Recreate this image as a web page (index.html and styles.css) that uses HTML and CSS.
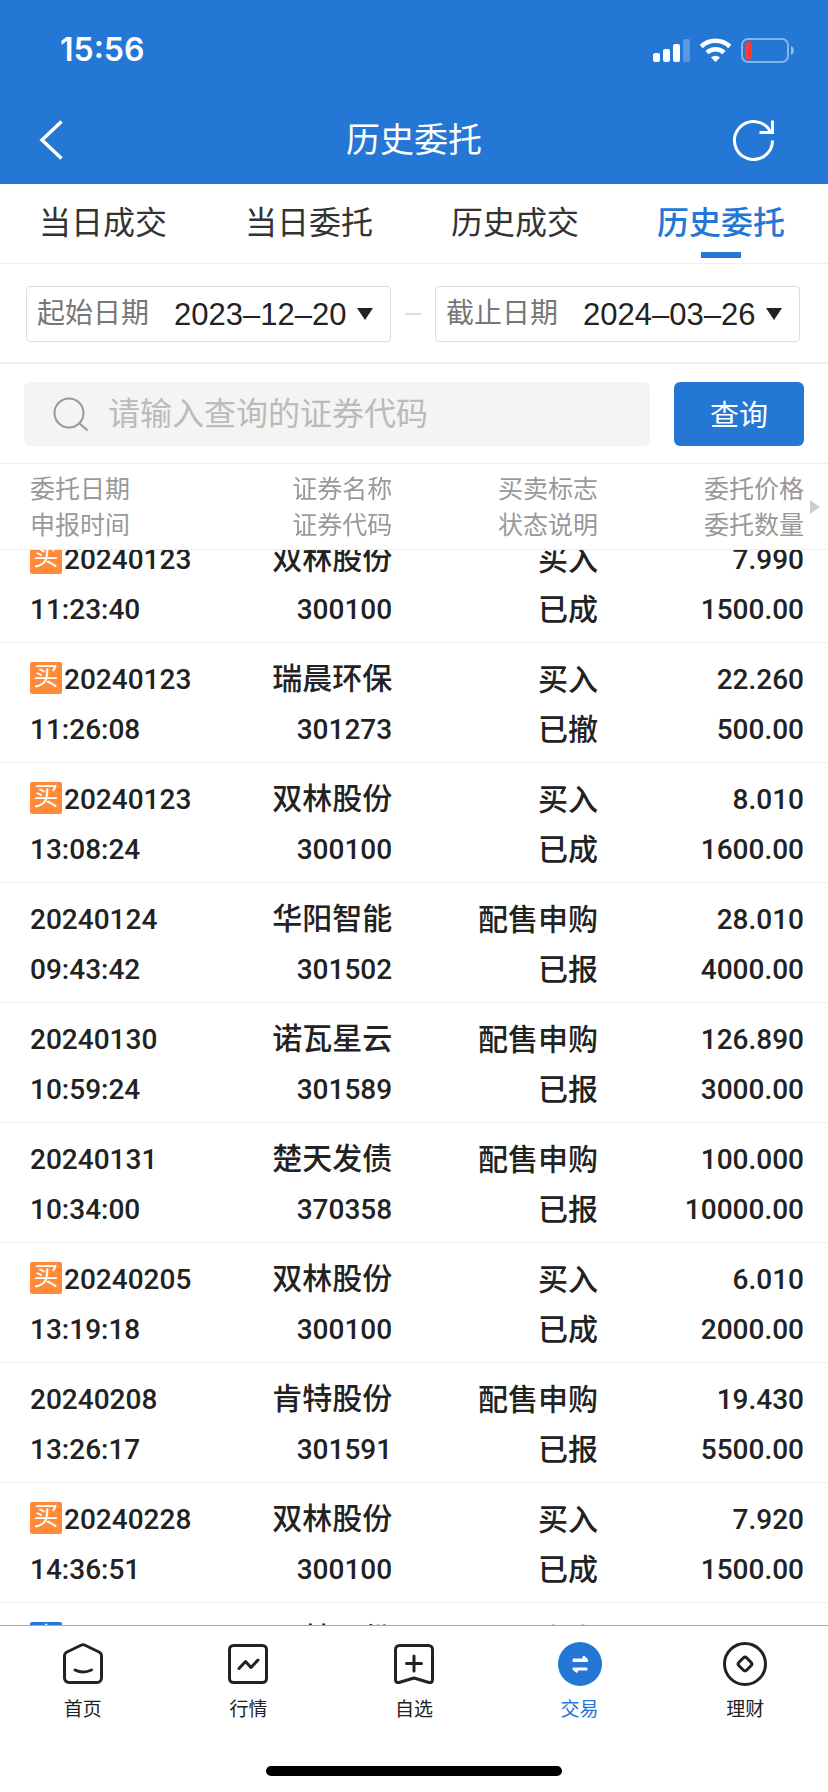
FILE: index.html
```
<!DOCTYPE html>
<html lang="zh-CN">
<head>
    <meta charset="UTF-8">
    <meta name="viewport" content="width=device-width, initial-scale=1.0">
    <title>历史委托</title>
    <link rel="stylesheet" href="styles.css">
</head>
<body>
    <header class="header">
        <div class="status-bar">
            <span class="time">15:56</span>
            <svg class="status-icons" width="144" height="28" viewBox="0 0 144 28">
                <g fill="#fff">
                    <rect x="3" y="17" width="7" height="9" rx="2"/>
                    <rect x="13" y="13" width="7" height="13" rx="2"/>
                    <rect x="23" y="8" width="7" height="18" rx="2"/>
                    <rect x="33" y="3" width="7" height="23" rx="2" opacity=".25"/>
                    <path d="M65.500 26l-4.500-4.500a6.400 6.400 0 0 1 9 0z"/>
                </g>
                <path d="M57 16.700a12.300 12.300 0 0 1 17 0M51.200 10.500a20.800 20.800 0 0 1 28.600 0" fill="none" stroke="#fff" stroke-width="4.500"/>
                <rect x="92" y="3" width="46" height="23" rx="6" fill="none" stroke="#fff" stroke-opacity=".45" stroke-width="2"/>
                <rect x="95" y="6" width="7" height="17" rx="2.500" fill="#ff3b30"/>
                <path d="M141 10v9c4-1.500 4-7.500 0-9z" fill="#fff" opacity=".5"/>
            </svg>
        </div>
        <div class="title-bar">
            <button class="icon-btn" type="button" aria-label="返回">
                <svg width="24" height="42" viewBox="0 0 24 42" fill="none" stroke="#fff" stroke-width="3.500"><path d="M22.500 2.500L3 21l19.500 18.500"/></svg>
            </button>
            <h1>历史委托</h1>
            <button class="icon-btn refresh" type="button" aria-label="刷新">
                <svg width="42" height="42" viewBox="0 0 42 42" fill="none" stroke="#fff" stroke-width="3">
                    <path d="M39.500 21.500A19 19 0 1 1 37.500 13"/>
                    <path d="M39.500 1.500V13.500H26.500"/>
                </svg>
            </button>
        </div>
    </header>

    <nav class="tabs">
        <a href="#">当日成交</a>
        <a href="#">当日委托</a>
        <a href="#">历史成交</a>
        <a href="#" class="active">历史委托</a>
    </nav>

    <form class="query">
        <div class="dates">
            <div class="date-field">
                <label for="startDate">起始日期</label>
                <select id="startDate"><option>2023–12–20</option></select>
                <svg class="arrow" width="16" height="12" viewBox="0 0 16 12"><path d="M0 0h16L8 12z" fill="#222"/></svg>
            </div>
            <span class="dash"></span>
            <div class="date-field">
                <label for="endDate">截止日期</label>
                <select id="endDate"><option>2024–03–26</option></select>
                <svg class="arrow" width="16" height="12" viewBox="0 0 16 12"><path d="M0 0h16L8 12z" fill="#222"/></svg>
            </div>
        </div>
        <div class="search">
            <label class="search-box" for="code">
                <svg width="36" height="36" viewBox="0 0 36 36" fill="none" stroke="#999" stroke-width="2"><circle cx="17" cy="17" r="14.500"/><path d="M27.500 27.500l8 7"/></svg>
                <input id="code" type="text" placeholder="请输入查询的证券代码" aria-label="证券代码">
            </label>
            <button class="search-btn" type="button">查询</button>
        </div>
    </form>

    <main class="orders" id="orders">
        <table>
            <thead>
                <tr>
                    <th>委托日期<br>申报时间</th>
                    <th>证券名称<br>证券代码</th>
                    <th>买卖标志<br>状态说明</th>
                    <th>委托价格<br>委托数量
                        <svg class="more" width="10" height="14" viewBox="0 0 10 14"><path d="M0 0l10 7-10 7z" fill="#ccc"/></svg>
                    </th>
                </tr>
            </thead>
            <tbody>
                <tr><td><span class="tag buy">买</span>20240123<br>11:23:40</td><td><span class="cn">双林股份</span><br>300100</td><td class="cn">买入<br>已成</td><td>7.990<br>1500.00</td></tr>
                <tr><td><span class="tag buy">买</span>20240123<br>11:26:08</td><td><span class="cn">瑞晨环保</span><br>301273</td><td class="cn">买入<br>已撤</td><td>22.260<br>500.00</td></tr>
                <tr><td><span class="tag buy">买</span>20240123<br>13:08:24</td><td><span class="cn">双林股份</span><br>300100</td><td class="cn">买入<br>已成</td><td>8.010<br>1600.00</td></tr>
                <tr><td>20240124<br>09:43:42</td><td><span class="cn">华阳智能</span><br>301502</td><td class="cn">配售申购<br>已报</td><td>28.010<br>4000.00</td></tr>
                <tr><td>20240130<br>10:59:24</td><td><span class="cn">诺瓦星云</span><br>301589</td><td class="cn">配售申购<br>已报</td><td>126.890<br>3000.00</td></tr>
                <tr><td>20240131<br>10:34:00</td><td><span class="cn">楚天发债</span><br>370358</td><td class="cn">配售申购<br>已报</td><td>100.000<br>10000.00</td></tr>
                <tr><td><span class="tag buy">买</span>20240205<br>13:19:18</td><td><span class="cn">双林股份</span><br>300100</td><td class="cn">买入<br>已成</td><td>6.010<br>2000.00</td></tr>
                <tr><td>20240208<br>13:26:17</td><td><span class="cn">肯特股份</span><br>301591</td><td class="cn">配售申购<br>已报</td><td>19.430<br>5500.00</td></tr>
                <tr><td><span class="tag buy">买</span>20240228<br>14:36:51</td><td><span class="cn">双林股份</span><br>300100</td><td class="cn">买入<br>已成</td><td>7.920<br>1500.00</td></tr>
                <tr><td><span class="tag sell">卖</span></td><td><span class="cn">双林股份</span></td><td class="cn">卖出</td><td></td></tr>
            </tbody>
        </table>
    </main>

    <footer class="footer">
        <nav class="bottom-nav">
            <a href="#">
                <svg width="44" height="44" viewBox="0 0 44 44" fill="none" stroke="#222" stroke-width="3" stroke-linecap="round" stroke-linejoin="round">
                    <path d="M20.500 3a3.500 3.500 0 0 1 3 0L38 10q2.500 1.300 2.500 4v22a4.500 4.500 0 0 1-4.500 4.500H8A4.500 4.500 0 0 1 3.500 36V14q0-2.700 2.500-4z"/>
                    <path d="M14 28q8 4 16.500 0"/>
                </svg>
                <span>首页</span>
            </a>
            <a href="#">
                <svg width="44" height="44" viewBox="0 0 44 44" fill="none" stroke="#222" stroke-width="3" stroke-linecap="round" stroke-linejoin="round">
                    <rect x="3.500" y="3.500" width="37" height="37" rx="4"/>
                    <path d="M13 26.500l6.500-7 5.500 6 7-7.500"/>
                </svg>
                <span>行情</span>
            </a>
            <a href="#">
                <svg width="44" height="44" viewBox="0 0 44 44" fill="none" stroke="#222" stroke-width="3" stroke-linecap="round" stroke-linejoin="round">
                    <path d="M7.500 3.500h29a4 4 0 0 1 4 4V37.500q0 3.500-3.500 3L22 36 7 40.500q-3.500.5-3.500-3V7.500a4 4 0 0 1 4-4z"/>
                    <path d="M22 14v15M14.500 21.500h15"/>
                </svg>
                <span>自选</span>
            </a>
            <a href="#" class="active">
                <svg width="44" height="44" viewBox="0 0 44 44">
                    <circle cx="22" cy="22" r="22" fill="#2577d5"/>
                    <path d="M15 16.500h9.500v-1.500q.5-2 2-1l3 3q1.500 1.500 0 3H15q-1-1.700 0-3.500zM29 25.500H15q-1.500 1.500 0 2.500l3 2.500q1.500 1 2-1v-1H29q1.500-1.500 0-3z" fill="#fff"/>
                </svg>
                <span>交易</span>
            </a>
            <a href="#">
                <svg width="44" height="44" viewBox="0 0 44 44" fill="none" stroke="#222" stroke-width="3">
                    <circle cx="22" cy="22" r="20.500"/>
                    <rect x="16.500" y="16.500" width="11" height="11" rx="2.500" transform="rotate(45 22 22)"/>
                </svg>
                <span>理财</span>
            </a>
        </nav>
        <div class="home-indicator"></div>
    </footer>

    <script>
        document.getElementById("orders").scrollTop = 27;
    </script>
</body>
</html>
```
FILE: styles.css
```
* {
    box-sizing: border-box;
}

body {
    display: flex;
    flex-direction: column;
    height: 100vh;
    margin: 0;
    background-color: #fff;
    color: #222;
    font-family: Roboto, "Noto Sans CJK SC", sans-serif;
}

a {
    color: inherit;
    text-decoration: none;
}

button,
input,
select {
    border: none;
    padding: 0;
    background: none;
    font-family: inherit;
    color: inherit;
}

svg {
    display: block;
}

.header {
    background-color: #2577d5;
    color: #fff;
}

.status-bar {
    display: flex;
    justify-content: space-between;
    align-items: center;
    height: 96px;
    padding: 3px 34px 0 60px;
}

.time {
    font-family: Inter, sans-serif;
    font-size: 32px;
    font-weight: 600;
}

.title-bar {
    display: grid;
    grid-template-columns: 1fr auto 1fr;
    align-items: center;
    height: 88px;
    padding: 0 53px 0 39px;
}

.title-bar h1 {
    margin: 0 0 0 14px;
    font-size: 34px;
    font-weight: 400;
    line-height: 48px;
}

.icon-btn {
    display: flex;
}

.refresh {
    justify-self: end;
}

/* 顶部标签 */
.tabs {
    display: flex;
    height: 80px;
    padding-right: 4px;
    border-bottom: 1px solid #eee;
}

.tabs a {
    flex: 1;
    display: flex;
    flex-direction: column;
    align-items: center;
    justify-content: flex-end;
    gap: 6px;
    padding-bottom: 5px;
    color: #333;
    font-size: 32px;
    line-height: 46px;
}

.tabs a::after {
    content: "";
    width: 40px;
    height: 6px;
}

.tabs .active {
    color: #2577d5;
    font-weight: 500;
}

.tabs .active::after {
    background-color: #2577d5;
}

/* 查询条件 */
.dates {
    display: flex;
    align-items: center;
    gap: 14px;
    padding: 22px 28px 20px 26px;
    border-bottom: 2px solid #eee;
}

.date-field {
    flex: 1;
    display: flex;
    align-items: center;
    height: 56px;
    padding: 0 17px 0 10px;
    border: 1px solid #ddd;
    border-radius: 4px;
}

.date-field label {
    margin-right: 25px;
    color: #777;
    font-size: 28px;
    line-height: 40px;
}

.date-field select {
    appearance: none;
    font-family: "Liberation Sans", sans-serif;
    font-size: 31px;
}

.arrow {
    margin-left: auto;
}

.dash {
    width: 16px;
    height: 2px;
    background-color: #ddd;
}

.search {
    display: flex;
    gap: 24px;
    padding: 18px 24px 17px;
    border-bottom: 1px solid #eee;
}

.search-box {
    flex: 1;
    display: flex;
    align-items: center;
    gap: 20px;
    height: 64px;
    padding: 0 28px;
    border-radius: 6px;
    background-color: #f4f4f4;
}

.search-box input {
    flex: 1;
    min-width: 0;
    height: 48px;
    font-size: 32px;
}

.search-box input::placeholder {
    color: #bbb;
}

.search-btn {
    width: 130px;
    height: 64px;
    padding-bottom: 2px;
    border-radius: 6px;
    background-color: #2577d5;
    color: #fff;
    font-size: 29px;
}

/* 委托列表 */
.orders {
    flex: 1;
    min-height: 0;
    overflow-y: auto;
    scrollbar-width: none;
}

table {
    width: 100%;
    border-spacing: 0;
    table-layout: fixed;
}

th,
td {
    border-bottom: 1px solid #eee;
    text-align: right;
    white-space: nowrap;
}

th {
    position: sticky;
    top: 0;
    z-index: 1;
    height: 86px;
    padding: 8px 0 5px;
    background-color: #fff;
    color: #999;
    font-size: 25px;
    font-weight: 400;
    line-height: 36px;
}

td {
    height: 120px;
    padding: 12px 0 7px;
    font-size: 28px;
    font-weight: 500;
    line-height: 50px;
    vertical-align: top;
}

th:first-child,
td:first-child {
    width: 22%;
    padding-left: 30px;
    text-align: left;
}

th:nth-child(2) {
    width: 210px;
}

th:nth-child(4) {
    width: 230px;
}

th:last-child,
td:last-child {
    padding-right: 24px;
}

.cn {
    font-size: 30px;
    line-height: 48px;
}

td.cn {
    line-height: 50px;
}

.more {
    position: absolute;
    top: 36px;
    right: 8px;
}

.tag {
    display: inline-block;
    width: 32px;
    height: 32px;
    margin-right: 2px;
    border-radius: 2px;
    color: #fff;
    font-size: 25px;
    font-weight: 400;
    line-height: 30px;
    text-align: center;
    vertical-align: 4px;
}

.buy {
    background-color: #ff8a38;
}

.sell {
    background-color: #2577d5;
}

/* 底部导航 */
.footer {
    border-top: 1px solid #aaa;
}

.bottom-nav {
    display: flex;
    padding-top: 16px;
}

.bottom-nav a {
    flex: 1;
    display: flex;
    flex-direction: column;
    align-items: center;
    gap: 10px;
    font-size: 19px;
    line-height: 28px;
}

.bottom-nav .active {
    color: #2577d5;
}

.home-indicator {
    width: 296px;
    height: 10px;
    margin: 42px auto 16px;
    border-radius: 5px;
    background-color: #000;
}
```
